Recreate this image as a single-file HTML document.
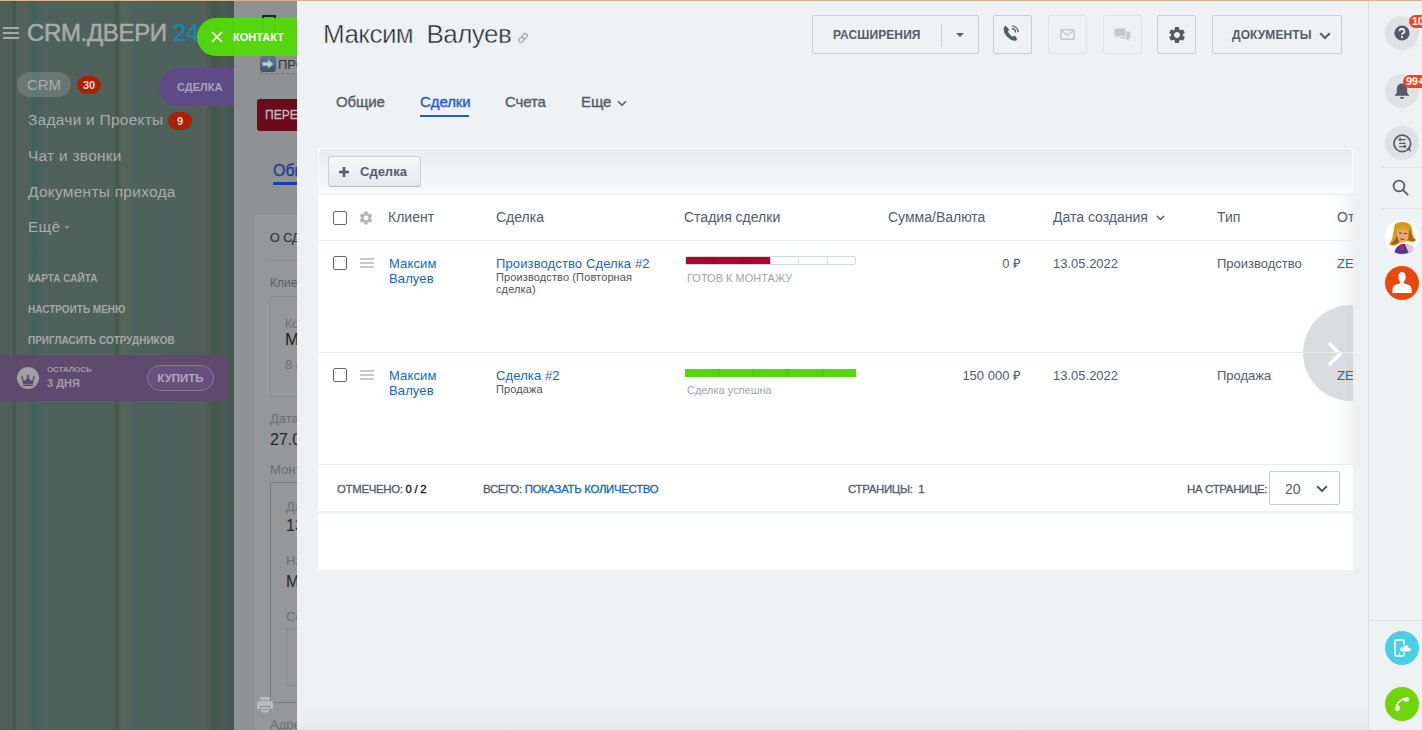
<!DOCTYPE html>
<html><head><meta charset="utf-8">
<style>
*{box-sizing:border-box;margin:0;padding:0}
html,body{width:1422px;height:730px;overflow:hidden;font-family:"Liberation Sans",sans-serif;background:#eef2f4}
.abs{position:absolute}
#topline{position:absolute;left:0;top:0;width:1422px;height:1px;background:#d6b58c;z-index:50}
#left{position:absolute;left:0;top:0;width:234px;height:730px;background:linear-gradient(90deg,#4e5f5a 0px,#4e5f5a 12px,#43564d 14.5px,#53625c 17px,#52605b 29px,#45605a 33px,#45625b 38px,#4f615b 41px,#4f615b 113px,#42574d 117px,#576359 121px,#53625b 131px,#466461 136px,#4e615b 140px,#4f605b 199px,#555f5b 205px,#43564d 214px,#47594f 218px,#4b5b55 223px,#42554e 234px);overflow:hidden}
#under{position:absolute;left:234px;top:0;width:63px;height:730px;background:#8e9293;overflow:hidden}
#panel{position:absolute;left:297px;top:0;width:1071px;height:730px;background:#eef2f4;overflow:hidden}
#rs{position:absolute;left:1368px;top:0;width:54px;height:730px;background:#eef2f4;border-left:1px solid #d6dde1}
#pbot{position:absolute;left:297px;top:705px;width:1071px;height:25px;background:linear-gradient(rgba(0,0,0,0),rgba(0,20,40,.035));z-index:30}

.stripe{position:absolute;top:0;height:730px;background:#44584f;opacity:.8}
.ham{position:absolute;left:3px;width:16px;height:2px;background:#a4aaa7}
.logo{position:absolute;left:27px;top:19px;font-size:24px;color:#a7acaa;white-space:nowrap;letter-spacing:-0.35px;-webkit-text-stroke:0.5px #a7acaa}
.crmpill{position:absolute;left:17px;top:72px;width:54px;height:25px;border-radius:13px;background:rgba(255,255,255,.14);color:#a9aeac;font-size:15px;line-height:25px;text-align:center}
.badge{position:absolute;height:18px;border-radius:9px;background:#a82103;color:#e8d6d0;font-size:11px;font-weight:bold;line-height:18px;text-align:center}
.dealpill{position:absolute;left:159px;top:68px;width:100px;height:38px;border-radius:19px 0 0 19px;background:#5e4b86;color:#aaa2bc;font-size:11px;font-weight:bold;line-height:38px;padding-left:18px}
.mi{position:absolute;left:28px;font-size:15.5px;letter-spacing:0.25px;color:#a8adab;white-space:nowrap;line-height:20px}
.caret{display:inline-block;margin-left:4px;vertical-align:middle;border-left:3px solid transparent;border-right:3px solid transparent;border-top:3px solid #8e9492}
.sm{position:absolute;left:28px;font-size:10px;font-weight:bold;color:#a3a8a6;white-space:nowrap;line-height:14px}
.trial{position:absolute;left:0;top:355px;width:228px;height:46px;background:#5d4a6e}
.crown{position:absolute;left:17px;top:12px;width:22px;height:22px;border-radius:11px;background:#a29ea6;padding:5px 4px}
.t1{position:absolute;left:47px;top:10px;font-size:8px;letter-spacing:-0.1px;font-weight:bold;color:#a39cab;line-height:10px}
.t2{position:absolute;left:47px;top:22px;font-size:11px;font-weight:bold;color:#a39cab;line-height:13px}
.buy{position:absolute;left:147px;top:10px;width:67px;height:26px;border-radius:13px;border:1px solid #8a7a96;background:#694f7c;color:#b1a9ba;font-size:11.5px;font-weight:bold;text-align:center;line-height:24px}

.u{position:absolute;white-space:nowrap;line-height:1.2}
#greenbtn{position:absolute;left:197px;top:18px;width:100px;height:38px;border-radius:19px 0 0 19px;background:rgba(85,216,11,.97);color:#fff;font-size:11px;font-weight:bold;line-height:38px;padding-left:14px;z-index:20;white-space:nowrap}
#greenbtn .x{font-size:13px;font-weight:normal;margin-right:9px}

.p{position:absolute;white-space:nowrap}
.title{font-size:26px;color:#1f2328;line-height:32px;letter-spacing:-0.55px;-webkit-text-stroke:0.5px #eef2f4}
.btn{position:absolute;border:1px solid #c6cdd3;border-radius:2px;background:transparent}
.btn.dis{border-color:#dde2e6}
.bt{position:absolute;top:1px;line-height:37px;font-size:12px;font-weight:bold;color:#535c69;letter-spacing:0.1px}
.tab{font-size:15px;color:#535c69;line-height:18px;-webkit-text-stroke:0.35px #535c69;letter-spacing:-0.1px}
.tab.act{color:#2459d6;-webkit-text-stroke:0.35px #2459d6}

#card{position:absolute;left:318px;top:148px;width:1035px;height:422px;background:#fff;overflow:hidden;border-radius:3px 3px 0 0}
#tb{position:absolute;left:0;top:0;width:1035px;height:46px;background:linear-gradient(#e8eff1,#f8fafa);border-top:1px solid #fff;border-right:1px solid #fff;border-left:1px solid #fff;border-radius:3px 3px 0 0}
#addbtn{position:absolute;left:10px;top:8px;width:93px;height:31px;border:1px solid #c9d0d4;border-bottom-color:#b4bbbf;border-radius:3px;background:linear-gradient(#f6f8f9,#e5eaed);font-size:13px;font-weight:bold;color:#535c69}
.hl{position:absolute;z-index:2;left:0;width:1035px;height:1px;background:#e7ecee}
.c{position:absolute;white-space:nowrap;z-index:2}
.cb{position:absolute;width:14px;height:14px;border:1px solid #6b6b6b;border-radius:2px;background:#fff}
.th{top:61px;font-size:14px;color:#535c69;line-height:16px}
.drag{position:absolute;width:14px;height:10px}
.drag i{display:block;height:2px;background:#c8cbce;margin-bottom:2px}
.lnk{font-size:13px;color:#2067b0;line-height:15px;letter-spacing:0.12px}
.sub{font-size:11px;color:#535353;line-height:11.5px;letter-spacing:0.12px}
.td{font-size:13px;color:#535c69;line-height:15px}
.bar{width:171px;height:9px;display:flex;border:1px solid #d5dadd;border-radius:2px;overflow:hidden;background:#fff}
.bar i{flex:1;border-left:1px solid #dde1e4}
.bar i:first-child{border-left:none}
.bar i.r{background:#ae0032;border-left-color:#8e0029}
.bar.g{border:none;border-radius:0;top:221px!important;height:8px}
.bar.g i{background:#55d80b;border-left-color:#4cbf0b}
.stg{font-size:11px;color:#a1a6ab;line-height:13px}
#fade{position:absolute;z-index:1;left:1015px;top:46px;width:20px;height:270px;background:linear-gradient(90deg,rgba(255,255,255,0),rgba(232,236,238,.6))}
#nextc{position:absolute;z-index:1;left:985px;top:157px;width:96px;height:96px;border-radius:48px;background:rgba(205,209,213,.75)}
.ft{font-size:11.4px;color:#535c69;line-height:14px;letter-spacing:-0.3px;-webkit-text-stroke:0.3px #535c69}
.ft b{color:#111;font-weight:normal;-webkit-text-stroke:0.3px #111}
#sel{position:absolute;left:951px;top:323px;width:71px;height:34px;border:1px solid #c6cdd3;border-radius:2px;font-size:13px;color:#535c69}

.rc{position:absolute;left:16px;width:34px;height:34px;border-radius:17px;background:#dfe3e6}
.rbadge{position:absolute;height:13px;border-radius:7px;background:#f4431d;color:#fff;font-size:11px;font-weight:bold;line-height:13px;text-align:left;padding-left:3px;letter-spacing:-0.3px}
</style></head><body>
<div id="topline"></div>
<div id="left">
 <div class="ham" style="top:27px"></div><div class="ham" style="top:32px"></div><div class="ham" style="top:37px"></div>
 <div class="logo">CRM.ДВЕРИ <span style="color:#1785b1;-webkit-text-stroke:0.5px #1785b1">24</span></div>
 <div class="crmpill">CRM</div>
 <div class="badge" style="left:77px;top:76px;width:24px">30</div>
 <div class="dealpill">СДЕЛКА</div>
 <div class="mi" style="top:110px">Задачи и Проекты</div>
 <div class="badge" style="left:168px;top:112px;width:24px">9</div>
 <div class="mi" style="top:146px">Чат и звонки</div>
 <div class="mi" style="top:182px">Документы прихода</div>
 <div class="mi" style="top:217px">Ещё<span class="caret"></span></div>
 <div class="sm" style="top:272px">КАРТА САЙТА</div>
 <div class="sm" style="top:303px">НАСТРОИТЬ МЕНЮ</div>
 <div class="sm" style="top:334px">ПРИГЛАСИТЬ СОТРУДНИКОВ</div>
 <div class="trial">
   <div class="crown"><svg width="14" height="11" viewBox="0 0 14 11"><path d="M1 3 L4 6 L7 1.5 L10 6 L13 3 L12 9 L2 9 Z" fill="#5d4a6e"/><circle cx="1" cy="2.5" r="1.2" fill="#5d4a6e"/><circle cx="13" cy="2.5" r="1.2" fill="#5d4a6e"/><circle cx="7" cy="1" r="1.2" fill="#5d4a6e"/><rect x="2" y="9.5" width="10" height="1.5" fill="#5d4a6e"/></svg></div>
   <div class="t1">ОСТАЛОСЬ</div>
   <div class="t2">3 ДНЯ</div>
   <div class="buy">КУПИТЬ</div>
 </div>
</div>
<div id="under">
 <div class="u" style="left:28px;top:15px;width:14px;height:18px;border:2px solid #222;border-bottom:none"></div>
 <div class="u" style="left:44px;top:16px;font-size:22px;color:#7a8a7a">ро</div>
 <div class="u" style="left:26px;top:56px;width:16px;height:16px;border-radius:3px;background:linear-gradient(#5d7892,#3c536b)"><svg style="position:absolute;left:2px;top:3px" width="12" height="10" viewBox="0 0 12 10"><path d="M0.5 3.2 H6 V0.5 L11.5 5 L6 9.5 V6.8 H0.5Z" fill="#c3c7cb"/></svg></div>
 <div class="u" style="left:44px;top:57px;font-size:13px;color:#30363c">ПРО</div>
 <div class="u" style="left:26px;top:73px;width:40px;border-top:1px dashed #6f7476"></div>
 <div class="u" style="left:23px;top:99px;width:60px;height:32px;border-radius:3px;background:#6b0a1d;color:#c9bcc0;font-size:12px;-webkit-text-stroke:0.3px #c9bcc0;line-height:32px;padding-left:8px">ПЕРЕДАТЬ</div>
 <div class="u" style="left:39px;top:161px;font-size:16px;color:#1d3fa0;-webkit-text-stroke:0.4px #1d3fa0">Общие</div>
 <div class="u" style="left:39px;top:182px;width:40px;height:3px;background:#1d3fa0"></div>
 <div class="u" style="left:21px;top:215px;width:60px;height:515px;background:#969798"></div>
 <div class="u" style="left:36px;top:231px;font-size:12.5px;color:#2f343a;-webkit-text-stroke:0.2px #2f343a">О СДЕЛКЕ</div>
 <div class="u" style="left:36px;top:260px;width:40px;height:1px;background:#87898b"></div>
 <div class="u" style="left:36px;top:276px;font-size:12px;color:#5b6064">Клиент</div>
 <div class="u" style="left:36px;top:296px;width:40px;height:101px;border:1px solid #8b8e8f"></div>
 <div class="u" style="left:51px;top:317px;font-size:12px;color:#6a6e71">Контакт</div>
 <div class="u" style="left:51px;top:330px;font-size:17px;color:#1b1f23">Максим</div>
 <div class="u" style="left:51px;top:357px;font-size:13px;color:#6a6e71">8 (</div>
 <div class="u" style="left:36px;top:411px;font-size:13px;color:#6a6e71">Дата</div>
 <div class="u" style="left:36px;top:430px;font-size:16px;color:#23272b">27.05</div>
 <div class="u" style="left:36px;top:462px;font-size:13px;color:#6a6e71">Монтаж</div>
 <div class="u" style="left:36px;top:482px;width:40px;height:221px;border:1px solid #777b7d"></div>
 <div class="u" style="left:52px;top:499px;font-size:13px;color:#6a6e71">Дата</div>
 <div class="u" style="left:52px;top:516px;font-size:16px;color:#23272b">13.05</div>
 <div class="u" style="left:52px;top:553px;font-size:13px;color:#6a6e71">Начало</div>
 <div class="u" style="left:52px;top:572px;font-size:16px;color:#23272b">Максим</div>
 <div class="u" style="left:52px;top:609px;font-size:13px;color:#6a6e71">Сотрудник</div>
 <div class="u" style="left:52px;top:628px;width:40px;height:58px;border:1px solid #888c8e"></div>
 <div class="u" style="left:23px;top:697px;width:16px;height:17px"><svg width="16" height="17" viewBox="0 0 16 17"><rect x="3" y="0" width="10" height="3" rx="0.5" fill="#b9bbbc"/><rect x="0" y="4" width="16" height="8" rx="1.5" fill="#b9bbbc"/><rect x="3.5" y="9.5" width="9" height="6.5" fill="#b9bbbc" stroke="#8e9293" stroke-width="1"/><rect x="5" y="12" width="6" height="1" fill="#8e9293"/></svg></div>
 <div class="u" style="left:36px;top:717px;font-size:13px;color:#6a6e71">Адрес</div>
</div>
<div id="greenbtn"><svg style="position:absolute;left:14px;top:13px" width="12" height="12" viewBox="0 0 12 12"><path d="M1 1 L11 11 M11 1 L1 11" stroke="#fff" stroke-width="1.6"/></svg><span style="position:absolute;left:36px;top:0">КОНТАКТ</span></div>
<div id="panel">
 <div class="p title" style="left:26px;top:18px">Максим&nbsp; Валуев</div>
 <div class="p" style="left:220px;top:30px"><svg width="12" height="12" viewBox="0 0 12 12"><g transform="rotate(-45 6 6)" fill="none" stroke="#a9b0b6" stroke-width="1.4"><rect x="0.8" y="3.9" width="5.6" height="4.2" rx="2.1"/><rect x="5.6" y="3.9" width="5.6" height="4.2" rx="2.1"/></g></svg></div>
 <div class="btn" style="left:515px;top:15px;width:167px;height:39px"><span class="bt" style="left:20px">РАСШИРЕНИЯ</span><div style="position:absolute;left:128px;top:8px;width:1px;height:23px;background:#c6cdd3"></div><div style="position:absolute;left:143px;top:17px;border-left:4px solid transparent;border-right:4px solid transparent;border-top:4px solid #535c69"></div></div>
 <div class="btn" style="left:696px;top:15px;width:39px;height:39px"><svg style="position:absolute;left:9px;top:9px" width="16" height="17" viewBox="0 0 16 17"><path d="M3.2 1.2 C2.4 0.9 1.5 1.3 1.1 2.2 C0 4.5 1.2 8.6 4.2 11.8 C7.2 15 10.8 16.4 12.9 15.6 C13.8 15.2 14.2 14.4 13.9 13.6 L12.6 11.4 C12.2 10.8 11.5 10.6 10.9 10.9 L9.6 11.7 C8 10.9 5.6 8.4 5 6.8 L5.8 5.6 C6.1 5 6 4.3 5.5 3.8 Z" fill="#535c69"/><path d="M8.8 3.5 A4.2 4.2 0 0 1 12.6 7.6" fill="none" stroke="#535c69" stroke-width="1.3"/><path d="M9.2 0.9 A6.8 6.8 0 0 1 15.2 7.2" fill="none" stroke="#535c69" stroke-width="1.3"/></svg></div>
 <div class="btn dis" style="left:751px;top:15px;width:39px;height:39px"><svg style="position:absolute;left:11px;top:13px" width="15" height="11" viewBox="0 0 15 11"><rect x="0.8" y="0.8" width="13.4" height="9.4" rx="1.5" fill="none" stroke="#c3c9ce" stroke-width="1.5"/><path d="M1.2 1.5 L7.5 6.2 L13.8 1.5" fill="none" stroke="#c3c9ce" stroke-width="1.5"/></svg></div>
 <div class="btn dis" style="left:806px;top:15px;width:39px;height:39px"><svg style="position:absolute;left:10px;top:12px" width="17" height="14" viewBox="0 0 17 14"><path d="M1.5 0.5 H10.5 a1 1 0 0 1 1 1 V7 a1 1 0 0 1 -1 1 H5 L2.5 10 V8 H1.5 a1 1 0 0 1 -1 -1 V1.5 a1 1 0 0 1 1 -1Z" fill="#c3c9ce"/><path d="M12.5 3.5 H15.5 a1 1 0 0 1 1 1 V9.5 a1 1 0 0 1 -1 1 H14.5 V13 L12 10.5 H7 a1 1 0 0 1 -1 -1 V9 H11 a1.5 1.5 0 0 0 1.5 -1.5 Z" fill="#c3c9ce"/></svg></div>
 <div class="btn" style="left:860px;top:15px;width:39px;height:39px"><svg style="position:absolute;left:9px;top:9px" width="20" height="20" viewBox="0 0 24 24"><path fill="#535c69" d="M19.14 12.94c.04-.3.06-.61.06-.94 0-.32-.02-.64-.07-.94l2.03-1.58a.49.49 0 0 0 .12-.61l-1.92-3.32a.488.488 0 0 0-.59-.22l-2.39.96c-.5-.38-1.03-.7-1.62-.94l-.36-2.54a.484.484 0 0 0-.48-.41h-3.84c-.24 0-.43.17-.47.41l-.36 2.54c-.59.24-1.13.57-1.62.94l-2.39-.96c-.22-.08-.47 0-.59.22L2.74 8.87c-.12.21-.08.47.12.61l2.03 1.58c-.05.3-.09.63-.09.94s.02.64.07.94l-2.03 1.58a.49.49 0 0 0-.12.61l1.92 3.32c.12.22.37.29.59.22l2.39-.96c.5.38 1.03.7 1.62.94l.36 2.54c.05.24.24.41.48.41h3.84c.24 0 .44-.17.47-.41l.36-2.54c.59-.24 1.13-.56 1.62-.94l2.39.96c.22.08.47 0 .59-.22l1.92-3.32c.12-.22.07-.47-.12-.61l-2.01-1.58zM12 15.6c-1.98 0-3.6-1.62-3.6-3.6s1.62-3.6 3.6-3.6 3.6 1.62 3.6 3.6-1.62 3.6-3.6 3.6z"/></svg></div>
 <div class="btn" style="left:915px;top:15px;width:130px;height:39px"><span class="bt" style="left:19px">ДОКУМЕНТЫ</span><svg style="position:absolute;left:106px;top:16px" width="12" height="8" viewBox="0 0 12 8"><path d="M1.2 1.2 L6 6 L10.8 1.2" fill="none" stroke="#535c69" stroke-width="2"/></svg></div>
 <div class="p tab" style="left:39px;top:93px">Общие</div>
 <div class="p tab act" style="left:123px;top:93px">Сделки</div>
 <div class="p" style="left:123px;top:115px;width:49px;height:2px;background:#2459d6"></div>
 <div class="p tab" style="left:208px;top:93px">Счета</div>
 <div class="p tab" style="left:284px;top:93px">Еще</div>
 <svg class="p" style="left:320px;top:100px" width="10" height="7" viewBox="0 0 10 7"><path d="M1 1.2 L5 5.2 L9 1.2" fill="none" stroke="#535c69" stroke-width="1.6"/></svg>
</div>
<div id="card">
 <div id="tb"></div>
 <div id="addbtn"><svg style="position:absolute;left:9px;top:9px" width="12" height="12" viewBox="0 0 12 12"><path d="M6 1 V11 M1 6 H11" stroke="#535c69" stroke-width="2.6"/></svg><span style="position:absolute;left:31px;top:0;line-height:29px">Сделка</span></div>
 <div class="hl" style="top:46px"></div>
 <div class="cb" style="left:15px;top:63px"></div>
 <svg class="c" style="left:40px;top:62px" width="16" height="16" viewBox="0 0 24 24"><path fill="#b1b6bb" d="M19.14 12.94c.04-.3.06-.61.06-.94 0-.32-.02-.64-.07-.94l2.03-1.58a.49.49 0 0 0 .12-.61l-1.92-3.32a.488.488 0 0 0-.59-.22l-2.39.96c-.5-.38-1.03-.7-1.620-.94l-.36-2.54a.484.484 0 0 0-.48-.41h-3.84c-.24 0-.43.17-.47.41l-.36 2.54c-.59.24-1.130.57-1.62.94l-2.39-.96c-.22-.08-.47 0-.59.22L2.74 8.87c-.12.21-.08.47.12.61l2.03 1.58c-.05.3-.09.63-.09.94s.02.64.07.94l-2.03 1.58a.49.49 0 0 0-.12.61l1.92 3.32c.12.22.37.29.59.22l2.39-.96c.5.38 1.03.7 1.62.94l.36 2.54c.05.24.24.41.48.41h3.84c.24 0 .44-.17.47-.41l.36-2.54c.59-.24 1.13-.56 1.62-.94l2.39.96c.22.08.47 0 .59-.22l1.92-3.32c.12-.22.07-.47-.12-.61l-2.01-1.58zM12 15.6c-1.98 0-3.6-1.620-3.6-3.6s1.62-3.6 3.6-3.6 3.6 1.62 3.6 3.6-1.62 3.6-3.6 3.6z"/></svg>
 <div class="c th" style="left:70px">Клиент</div>
 <div class="c th" style="left:178px">Сделка</div>
 <div class="c th" style="left:366px">Стадия сделки</div>
 <div class="c th" style="left:570px">Сумма/Валюта</div>
 <div class="c th" style="left:735px">Дата создания</div>
 <svg class="c" style="left:838px;top:67px" width="9" height="6" viewBox="0 0 9 6"><path d="M1 1 L4.5 4.5 L8 1" fill="none" stroke="#535c69" stroke-width="1.5"/></svg>
 <div class="c th" style="left:899px">Тип</div>
 <div class="c th" style="left:1019px">Отв</div>
 <div class="hl" style="top:92px"></div>

 <div class="cb" style="left:15px;top:108px"></div>
 <div class="drag" style="left:42px;top:110px"><i></i><i></i><i></i></div>
 <div class="c lnk" style="left:71px;top:108px">Максим<br>Валуев</div>
 <div class="c lnk" style="left:178px;top:108px">Производство Сделка #2</div>
 <div class="c sub" style="left:178px;top:124px">Производство (Повторная<br>сделка)</div>
 <div class="c bar" style="left:367px;top:108px"><i class="r"></i><i class="r"></i><i class="r"></i><i></i><i></i><i></i></div>
 <div class="c stg" style="left:369px;top:124px">ГОТОВ К МОНТАЖУ</div>
 <div class="c td" style="left:603px;top:108px;width:100px;text-align:right">0 ₽</div>
 <div class="c td" style="left:735px;top:108px">13.05.2022</div>
 <div class="c td" style="left:899px;top:108px">Производство</div>
 <div class="c lnk" style="left:1019px;top:108px">ZEN</div>
 <div class="hl" style="top:204px"></div>

 <div class="cb" style="left:15px;top:220px"></div>
 <div class="drag" style="left:42px;top:222px"><i></i><i></i><i></i></div>
 <div class="c lnk" style="left:71px;top:220px">Максим<br>Валуев</div>
 <div class="c lnk" style="left:178px;top:220px">Сделка #2</div>
 <div class="c sub" style="left:178px;top:236px">Продажа</div>
 <div class="c bar g" style="left:367px;top:220px"><i></i><i></i><i></i><i></i><i></i></div>
 <div class="c stg" style="left:369px;top:236px">Сделка успешна</div>
 <div class="c td" style="left:603px;top:220px;width:100px;text-align:right">150 000 ₽</div>
 <div class="c td" style="left:735px;top:220px">13.05.2022</div>
 <div class="c td" style="left:899px;top:220px">Продажа</div>
 <div class="c lnk" style="left:1019px;top:220px;z-index:3">ZEN</div>
 <div class="hl" style="top:316px"></div>
 <div id="fade"></div>
 <div id="nextc"><svg style="position:absolute;left:23px;top:36px" width="17" height="26" viewBox="0 0 17 26"><path d="M3 2 L14 13 L3 24" fill="none" stroke="#fff" stroke-width="3.5"/></svg></div>

 <div class="c ft" style="left:19px;top:334px">ОТМЕЧЕНО: <b>0 / 2</b></div>
 <div class="c ft" style="left:165px;top:334px">ВСЕГО: <span style="color:#2067b0;-webkit-text-stroke:0.3px #2067b0">ПОКАЗАТЬ КОЛИЧЕСТВО</span></div>
 <div class="c ft" style="left:530px;top:334px">СТРАНИЦЫ:&nbsp; 1</div>
 <div class="c ft" style="left:869px;top:334px">НА СТРАНИЦЕ:</div>
 <div id="sel"><span style="position:absolute;left:15px;top:1px;line-height:32px;font-size:14px">20</span><svg style="position:absolute;left:46px;top:13px" width="12" height="8" viewBox="0 0 12 8"><path d="M1.2 1.2 L6 6 L10.8 1.2" fill="none" stroke="#535c69" stroke-width="2"/></svg></div>
 <div style="position:absolute;left:0;top:363px;width:1035px;height:3px;background:#eef2f4"></div>
</div>
<div id="pbot"></div>
<div id="rs">
 <div class="rc" style="top:16px"><svg style="position:absolute;left:9px;top:9px" width="16" height="16" viewBox="0 0 16 16"><circle cx="8" cy="8" r="7.6" fill="#535c69"/><path d="M5.6 6.2 a2.4 2.3 0 1 1 3.4 2.1 c-.7.4-1 .7-1 1.5" fill="none" stroke="#fff" stroke-width="1.7"/><circle cx="8" cy="12" r="1.05" fill="#fff"/></svg></div>
 <div class="rbadge" style="left:40px;top:15px;width:22px">10</div>
 <div class="rc" style="top:74px"><svg style="position:absolute;left:8px;top:8px" width="18" height="19" viewBox="0 0 18 19"><path d="M9 1.5 c-3.3 0 -5.2 2.6 -5.2 5.6 v3.6 l-2.3 3 h15 l-2.3 -3 v-3.6 c0 -3 -1.9 -5.6 -5.2 -5.6z" fill="#535c69"/><path d="M7 15 h4 a2 2 0 0 1 -4 0z" fill="#535c69"/></svg></div>
 <div class="rbadge" style="left:34px;top:75px;width:30px">99+</div>
 <div class="rc" style="top:126px"><svg style="position:absolute;left:0;top:0" width="34" height="34" viewBox="0 0 34 34"><circle cx="17.3" cy="17.4" r="8.3" fill="none" stroke="#535c69" stroke-width="1.7"/><path d="M21.5 23 L26.2 25.8 L24.6 21.2Z" fill="#535c69"/><path d="M14.2 13.6 H20.6 M14.2 17.4 H20.6 M14.2 20.6 H20.6" stroke="#535c69" stroke-width="1.3"/><path d="M15.6 12 L14 13.6 L15.6 15.2 M19.2 19 L20.8 20.6 L19.2 22.2" fill="none" stroke="#535c69" stroke-width="1.1"/></svg></div>
 <div style="position:absolute;left:12px;top:167px;width:42px;height:1px;background:#dde3e6"></div>
 <svg style="position:absolute;left:23px;top:179px" width="18" height="18" viewBox="0 0 18 18"><circle cx="7" cy="7" r="5.4" fill="none" stroke="#535c69" stroke-width="1.7"/><path d="M10.8 10.8 L16.2 16.2" stroke="#535c69" stroke-width="1.9"/></svg>
 <div style="position:absolute;left:12px;top:208px;width:42px;height:1px;background:#dde3e6"></div>
 <div class="rc" style="top:220px;background:#fff;overflow:hidden"><svg width="34" height="34" viewBox="0 0 34 34">
<path d="M10 4 C13 1 24 1 26 6 C28 11 27 17 31 20 C29 23 25 22 23 21 L14 23 C11 26 7 27 4 24 C8 21 8 12 10 4Z" fill="#d99a1c"/>
<path d="M25 8 C27 13 26 18 31 20 C28 22 25 21 23 20Z" fill="#a8641a"/>
<path d="M6 23 C9 22 11 19 12 15 L14 22 C11 25 8 26 6 23Z" fill="#9a5a18"/>
<path d="M12 9 C14 6 21 6 23 10 L23 17 C22 21 18 23 15 22 C13 20 12 16 12 9Z" fill="#eaa878"/>
<path d="M13 8 C16 5 22 6 24 10 C20 9 16 9 13 12Z" fill="#e0a020"/>
<path d="M15.5 19 L19 19.5" stroke="#c0202a" stroke-width="1.2"/>
<path d="M14 13 h3 M19 13.5 h3" stroke="#4a3020" stroke-width="0.9"/>
<path d="M9 34 C10 28 13 25 17 24 C22 23 27 25 29 34Z" fill="#4a3aa0"/>
<path d="M20 24 C24 24 28 25 30 29 L29 34 L24 34Z" fill="#e6c6d6"/>
<path d="M16 24 L18 24 L19.5 29 L17 31 L15 28Z" fill="#d0203a"/>
</svg></div>
 <div class="rc" style="top:266px;background:#e9470b"><svg style="position:absolute;left:0;top:0" width="34" height="34" viewBox="0 0 34 34"><path d="M17 6 c-2.4 0 -3.7 1.8 -3.7 4.6 c0 2.4 .8 4.2 1.9 5.2 v1.4 l-4.6 1.6 c-1.8 .7 -2.8 1.8 -3 3.6 l-.3 4.5 h19.4 l-.3 -4.5 c-.2 -1.8 -1.2 -2.9 -3 -3.6 l-4.6 -1.6 v-1.4 c1.1 -1 1.9 -2.8 1.9 -5.2 c0 -2.8 -1.3 -4.6 -3.7 -4.6z" fill="#fff"/></svg></div>
 <div style="position:absolute;left:0;top:620px;width:54px;height:1px;background:#dde3e6"></div>
 <div class="rc" style="top:631px;background:#4bcfe3"><svg style="position:absolute;left:9px;top:8px" width="18" height="19" viewBox="0 0 18 19"><rect x="1" y="1" width="9" height="16" rx="1.5" fill="none" stroke="#fff" stroke-width="1.6"/><circle cx="5.5" cy="14.6" r="0.9" fill="#fff"/><path d="M7.5 13 h7.5 a2.4 2.4 0 0 0 0 -4.8 a3 3 0 0 0 -5.8 -.6 a2.3 2.3 0 0 0 -1.7 5.4z" fill="#fff" stroke="#4bcfe3" stroke-width="1.2"/></svg></div>
 <div class="rc" style="top:687px;background:#70d60a"><svg style="position:absolute;left:8px;top:8px" width="18" height="18" viewBox="0 0 24 24"><g transform="rotate(90 12 12)"><path fill="#fff" d="M6.62 10.79c1.44 2.83 3.76 5.14 6.59 6.59l2.2-2.2c.27-.27.67-.36 1.02-.24 1.12.37 2.33.57 3.57.57.55 0 1 .45 1 1V20c0 .55-.45 1-1 1-9.39 0-17-7.61-17-17 0-.55.45-1 1-1h3.5c.55 0 1 .45 1 1 0 1.25.2 2.45.57 3.57.11.35.03.74-.25 1.02l-2.2 2.2z"/></g></svg></div>
</div>
</body></html>
